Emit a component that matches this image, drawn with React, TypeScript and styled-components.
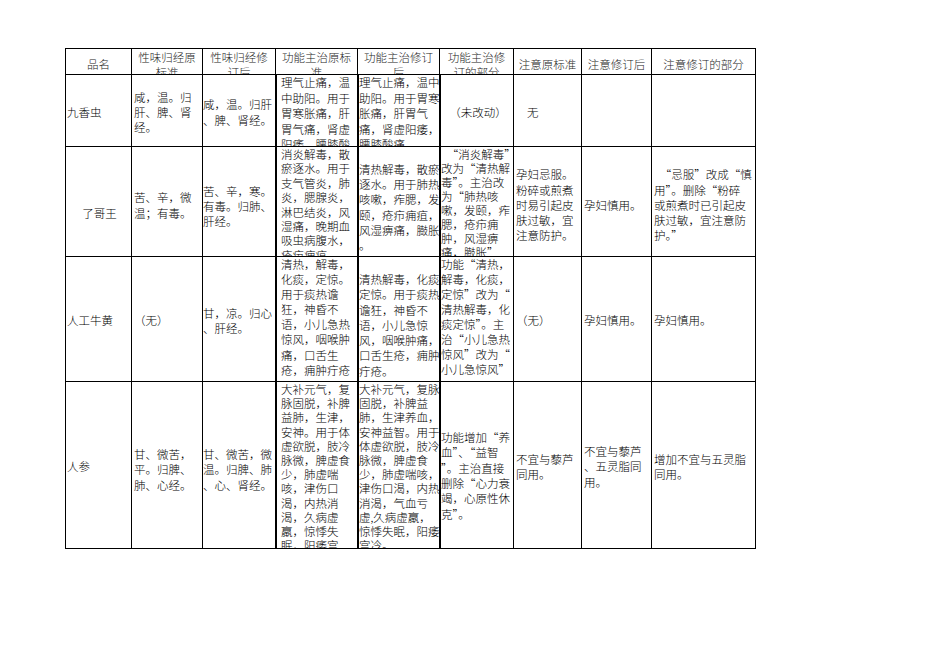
import React from "react";
import styled, { createGlobalStyle } from "styled-components";

const Global = createGlobalStyle`
  html, body { margin: 0; padding: 0; background: #ffffff; }
  body {
    font-family: "Noto Sans CJK SC", "Liberation Serif", serif;
    color: #000;
  }
`;

const Page = styled.div`
  width: 950px;
  height: 672px;
  padding: 48px 0 0 65px;
  box-sizing: border-box;
`;

const Sheet = styled.div`
  display: grid;
  grid-template-columns: 66px 71px 73px 82px 82px 74px 68px 70px 104px;
  grid-template-rows: 26px 72px 110px 125px 167px;
  width: max-content;
  border-top: 1px solid #000;
  border-left: 1px solid #000;
`;

type Align = "left" | "center";

const BaseCell = styled.div`
  box-sizing: border-box;
  border-right: 1px solid #000;
  border-bottom: 1px solid #000;
  overflow: hidden;
  display: flex;
  flex-direction: column;
  font-size: 11.5px;
  font-weight: 300;
`;

const HeadCell = styled(BaseCell)`
  justify-content: safe flex-end;
  padding: 1px 0 2px 0;
  text-align: center;
  line-height: 15px;
  color: #262626;
`;

const Cell = styled(BaseCell)<{ $align: Align; $top?: boolean; $thick?: boolean; $pad: number; $drop: number; $lh: number }>`
  border-left: ${(p) => (p.$thick ? "1px solid #000" : "0")};
  justify-content: ${(p) => (p.$top ? "flex-start" : "safe center")};
  padding: ${(p) => (p.$top ? 0 : p.$drop)}px 0 0 ${(p) => p.$pad}px;
  text-align: ${(p) => p.$align};
  line-height: ${(p) => p.$lh}px;
  color: #000;
`;

const Line = styled.span`
  display: block;
  white-space: nowrap;
`;

type CellData = { lines: string[]; align?: Align; top?: boolean; pad?: number; drop?: number; lh?: number };

const headers: string[][] = [
  ["品名"],
  ["性味归经原", "标准"],
  ["性味归经修", "订后"],
  ["功能主治原标", "准"],
  ["功能主治修订", "后"],
  ["功能主治修", "订的部分"],
  ["注意原标准"],
  ["注意修订后"],
  ["注意修订的部分"],
];

const rows: CellData[][] = [
  [
    { lines: ["九香虫"], pad: 1 },
    { lines: ["咸，温。归", "肝、脾、肾", "经。"] },
    { lines: ["咸，温。归肝", "、脾、肾经。"], pad: 0 },
    {
      lines: ["理气止痛，温", "中助阳。用于", "胃寒胀痛，肝", "胃气痛，肾虚", "阳痿，腰膝酸"],
      top: true,
      pad: 4,
      lh: 15.5,
    },
    {
      lines: ["理气止痛，温中", "助阳。用于胃寒", "胀痛，肝胃气", "痛，肾虚阳痿，", "腰膝酸痛。"],
      top: true,
      pad: 0,
      lh: 15.5,
    },
    { lines: ["（未改动）"], align: "center" },
    { lines: ["无"], pad: 13 },
    { lines: [] },
    { lines: [] },
  ],
  [
    { lines: ["了哥王"], align: "center", drop: 24 },
    { lines: ["苦、辛，微", "温；有毒。"], drop: 8 },
    { lines: ["苦、辛，寒。", "有毒。归肺、", "肝经。"], pad: 0, drop: 10 },
    {
      lines: [
        "消炎解毒，散",
        "瘀逐水。用于",
        "支气管炎，肺",
        "炎，腮腺炎，",
        "淋巴结炎，风",
        "湿痛，晚期血",
        "吸虫病腹水，",
        "疮疖痈疽。",
      ],
      top: true,
      pad: 4,
      lh: 14.4,
    },
    {
      lines: ["清热解毒，散瘀", "逐水。用于肺热", "咳嗽，痄腮，发", "颐，疮疖痈疽，", "风湿痹痛，臌胀", "。"],
      pad: 0,
      drop: 12,
    },
    {
      lines: [
        "\u2002“消炎解毒”",
        "改为“清热解",
        "毒”。主治改",
        "为“肺热咳",
        "嗽，发颐，痄",
        "腮，疮疖痈",
        "肿，风湿痹",
        "痛，臌胀”",
      ],
      top: true,
      pad: 0,
      lh: 14,
    },
    { lines: ["孕妇忌服。", "粉碎或煎煮", "时易引起皮", "肤过敏，宜", "注意防护。"], drop: 8 },
    { lines: ["孕妇慎用。"], drop: 8 },
    { lines: ["\u2002“忌服”改成“慎", "用”。删除“粉碎", "或煎煮时已引起皮", "肤过敏，宜注意防", "护。”"], drop: 8 },
  ],
  [
    { lines: ["人工牛黄"], pad: 1 },
    { lines: ["（无）"] },
    { lines: ["甘，凉。归心", "、肝经。"], pad: 0 },
    {
      lines: [
        "清热，解毒，",
        "化痰，定惊。",
        "用于痰热谵",
        "狂，神昏不",
        "语，小儿急热",
        "惊风，咽喉肿",
        "痛，口舌生",
        "疮，痈肿疔疮",
        "。",
      ],
      top: true,
      pad: 4,
      lh: 15.1,
    },
    {
      lines: ["清热解毒，化痰", "定惊。用于痰热", "谵狂，神昏不", "语，小儿急惊", "风，咽喉肿痛，", "口舌生疮，痈肿", "疔疮。"],
      pad: 0,
      drop: 13,
    },
    {
      lines: [
        "功能“清热，",
        "解毒，化痰，",
        "定惊”改为“",
        "清热解毒，化",
        "痰定惊”。主",
        "治“小儿急热",
        "惊风”改为“",
        "小儿急惊风”",
        "。",
      ],
      top: true,
      pad: 0,
      lh: 15,
    },
    { lines: ["（无）"] },
    { lines: ["孕妇慎用。"] },
    { lines: ["孕妇慎用。"] },
  ],
  [
    { lines: ["人参"], pad: 1 },
    { lines: ["甘、微苦，", "平。归脾、", "肺、心经。"], drop: 10 },
    { lines: ["甘、微苦，微", "温。归脾、肺", "、心、肾经。"], pad: 0, drop: 10 },
    {
      lines: [
        "大补元气，复",
        "脉固脱，补脾",
        "益肺，生津，",
        "安神。用于体",
        "虚欲脱，肢冷",
        "脉微，脾虚食",
        "少，肺虚喘",
        "咳，津伤口",
        "渴，内热消",
        "渴，久病虚",
        "羸，惊悸失",
        "眠，阳痿宫",
      ],
      top: true,
      pad: 4,
      lh: 14.2,
    },
    {
      lines: [
        "大补元气，复脉",
        "固脱，补脾益",
        "肺，生津养血，",
        "安神益智。用于",
        "体虚欲脱，肢冷",
        "脉微，脾虚食",
        "少，肺虚喘咳，",
        "津伤口渴，内热",
        "消渴，气血亏",
        "虚,久病虚羸，",
        "惊悸失眠，阳痿",
        "宫冷。",
      ],
      top: true,
      pad: 0,
      lh: 14.2,
    },
    { lines: ["功能增加“养", "血”、“益智", "”。主治直接", "删除“心力衰", "竭，心原性休", "克”。"], pad: 0, drop: 22 },
    { lines: ["不宜与藜芦", "同用。"] },
    { lines: ["不宜与藜芦", "、五灵脂同", "用。"] },
    { lines: ["增加不宜与五灵脂", "同用。"] },
  ],
];

const thickCols = new Set([3, 4, 5]);

export default function App() {
  return (
    <>
      <Global />
      <Page>
        <Sheet>
          {headers.map((h, i) => (
            <HeadCell key={`h${i}`}>
              {h.map((l, j) => (
                <Line key={j}>{l}</Line>
              ))}
            </HeadCell>
          ))}
          {rows.map((row, r) =>
            row.map((c, i) => (
              <Cell
                key={`${r}-${i}`}
                $align={c.align ?? "left"}
                $top={c.top}
                $thick={thickCols.has(i)}
                $pad={c.pad ?? 2}
                $drop={c.drop ?? 4}
                $lh={c.lh ?? 15.3}
              >
                {c.lines.map((l, j) => (
                  <Line key={j}>{l}</Line>
                ))}
              </Cell>
            ))
          )}
        </Sheet>
      </Page>
    </>
  );
}
